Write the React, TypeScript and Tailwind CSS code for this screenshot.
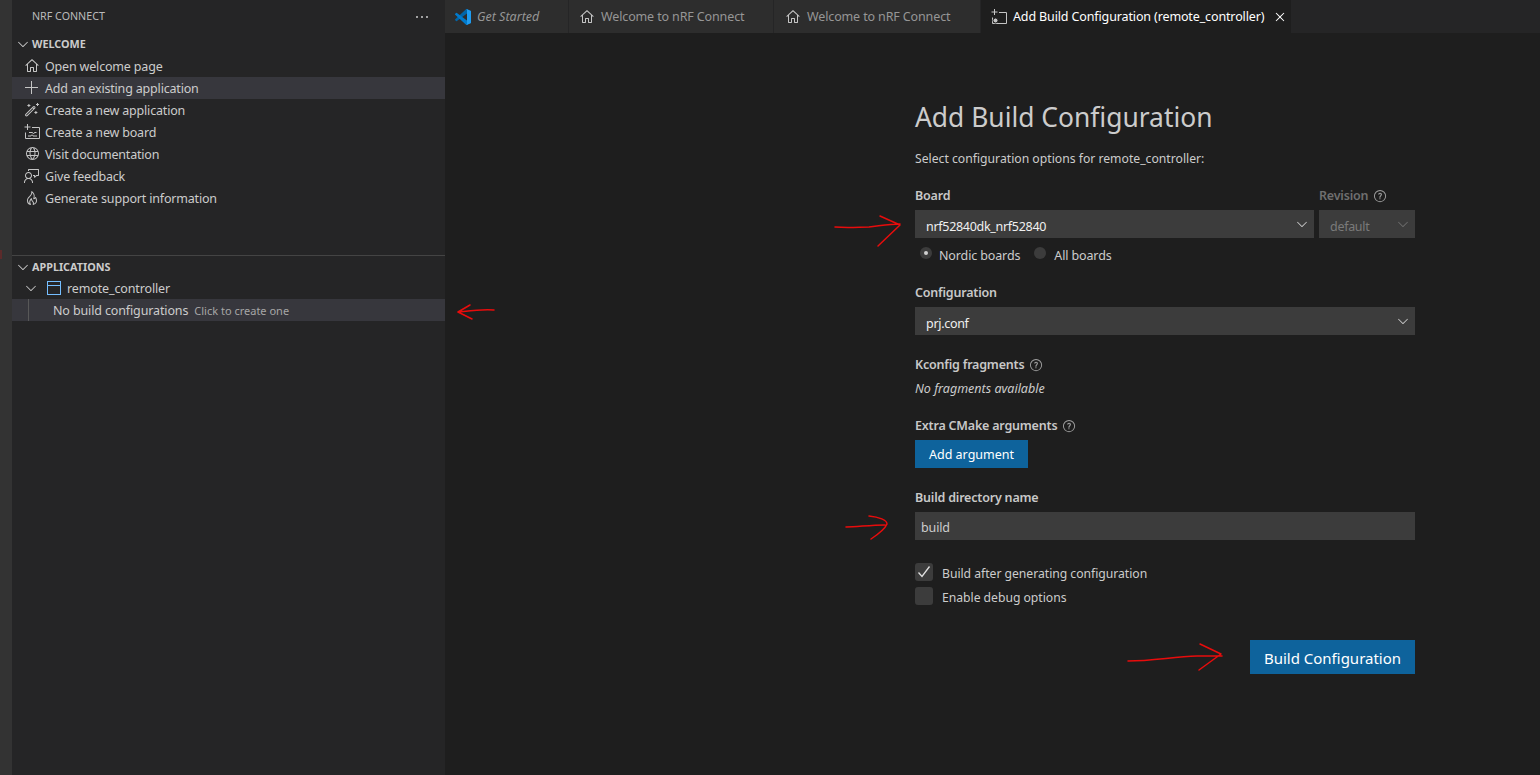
import React from "react";
import {
  VscAdd,
  VscChevronDown,
  VscClose,
  VscEllipsis,
  VscFeedback,
  VscFlame,
  VscGlobe,
  VscHome,
  VscQuestion,
  VscWand,
} from "react-icons/vsc";

const BoardIcon = ({ gear = false }: { gear?: boolean }) => (
  <svg width="16" height="16" viewBox="0 0 16 16" fill="none" stroke="currentColor" strokeWidth="1">
    <path d="M3.5 0v6M0.5 3h6" />
    <path d="M8 3.5h7.5v11h-14v-6" />
    {gear ? (
      <circle cx="4.5" cy="11.5" r="2.5" fill="currentColor" stroke="#1e1e1e" />
    ) : (
      <path d="M5 8.5h3.5a1 1 0 1 0 2 0h2M4 12h3a1 1 0 1 1 2 0h4" />
    )}
  </svg>
);

const VsLogo = () => (
  <svg width="16" height="16" viewBox="0 0 100 100" className="shrink-0">
    <path fill="#0065a9" d="M96.5 10.8 75.9.9a6.2 6.2 0 0 0-7.1 1.2L1.4 63.6a4.2 4.2 0 0 0 0 6.1l5.5 5a4.2 4.2 0 0 0 5.3.2L93.4 13.4c2.7-2.1 6.6-.1 6.6 3.3v-.2a6.2 6.2 0 0 0-3.5-5.7Z" />
    <path fill="#007acc" d="M96.5 89.2 75.9 99.1a6.2 6.2 0 0 1-7.1-1.2L1.4 36.4a4.2 4.2 0 0 1 0-6.1l5.5-5a4.2 4.2 0 0 1 5.3-.2l81.2 61.5c2.7 2.1 6.6.1 6.6-3.3v.2a6.2 6.2 0 0 1-3.5 5.7Z" />
    <path fill="#1f9cf0" d="M75.9 99.1a6.2 6.2 0 0 1-7.1-1.2c2.3 2.3 6.2.7 6.2-2.6V4.7c0-3.3-3.9-4.9-6.2-2.6A6.2 6.2 0 0 1 75.9.9l20.6 9.9a6.2 6.2 0 0 1 3.5 5.6v67.2a6.2 6.2 0 0 1-3.5 5.6L75.9 99.1Z" />
  </svg>
);

const RepoIcon = () => (
  <svg width="16" height="16" viewBox="0 0 16 16" fill="none" stroke="#75beff" strokeWidth="1">
    <rect x="1.5" y="1.5" width="13" height="13" />
    <path d="M1.5 5.5h13" />
  </svg>
);

const Arrow = ({ className, d, w, h }: { className: string; d: string; w: number; h: number }) => (
  <svg
    className={`absolute ${className}`}
    width={w}
    height={h}
    viewBox={`0 0 ${w} ${h}`}
    fill="none"
    stroke="#e80c0c"
    strokeWidth="1.5"
    strokeLinecap="round"
    strokeLinejoin="round"
  >
    <path d={d} />
  </svg>
);

const welcomeItems: { label: string; icon: React.ReactNode; active?: boolean }[] = [
  { label: "Open welcome page", icon: <VscHome size={16} /> },
  { label: "Add an existing application", icon: <VscAdd size={16} />, active: true },
  { label: "Create a new application", icon: <VscWand size={16} /> },
  { label: "Create a new board", icon: <BoardIcon /> },
  { label: "Visit documentation", icon: <VscGlobe size={16} /> },
  { label: "Give feedback", icon: <VscFeedback size={16} /> },
  { label: "Generate support information", icon: <VscFlame size={16} /> },
];

const Tab = ({ label, icon, italic, width, pad = "pl-[10px]" }: { label: string; icon: React.ReactNode; italic?: boolean; width: string; pad?: string }) => (
  <div className={`flex h-full shrink-0 items-center gap-[6px] bg-[#2d2d2d] text-[#969696] ${pad} ${width} ${italic ? "italic tracking-normal" : ""}`}>
    {icon}
    <span className="whitespace-nowrap pt-[2px]">{label}</span>
  </div>
);

const Select = ({ value, disabled, className }: { value: string; disabled?: boolean; className: string }) => (
  <div className={`flex h-[28px] items-center justify-between bg-[#3c3c3c] pl-[11px] pr-[4px] ${disabled ? "text-[#7a7a7a]" : "text-[#f0f0f0]"} ${className}`}>
    <span className="pt-[6px] tracking-[-0.3px]">{value}</span>
    <VscChevronDown size={16} className={disabled ? "text-[#6c6c6c]" : "text-[#c8c8c8]"} />
  </div>
);

const Help = () => <VscQuestion size={15} className="ml-[5px] text-[#a0a0a0]" />;

const Label = ({ children, className = "text-[#c8c8c8]" }: { children: React.ReactNode; className?: string }) => (
  <div className={`flex h-[18px] items-center font-semibold tracking-[-0.2px] ${className}`}>{children}</div>
);

export default function App() {
  return (
    <div
      className="relative flex h-[775px] w-[1540px] overflow-hidden bg-[#1e1e1e] text-[12.5px] tracking-[-0.13px] text-[#cccccc]"
      style={{ fontFamily: '"Noto Sans", sans-serif' }}
    >
      {/* activity bar strip */}
      <div className="w-[12px] shrink-0 bg-[#333333]" />

      {/* side bar */}
      <aside className="flex w-[433px] shrink-0 flex-col bg-[#252526]">
        <div className="flex h-[33px] shrink-0 items-center justify-between pl-[20px] pr-[15px] text-[10.7px] tracking-normal text-[#bbbbbb]">
          <span>NRF CONNECT</span>
          <VscEllipsis size={16} className="text-[#cccccc]" />
        </div>

        <div className="flex h-[22px] items-center gap-[1px] pl-[3px] text-[10.8px] font-bold tracking-normal text-[#cccccc]">
          <VscChevronDown size={16} />
          <span>WELCOME</span>
        </div>
        {welcomeItems.map((item) => (
          <div key={item.label} className={`flex h-[22px] items-center gap-[5px] pl-[12px] tracking-[-0.18px] ${item.active ? "bg-[#37373d]" : ""}`}>
            <span className="flex w-[16px] justify-center text-[#c5c5c5]">{item.icon}</span>
            <span className="pt-[2px]">{item.label}</span>
          </div>
        ))}

        <div className="mt-[46px] border-t border-[#444444]" />
        <div className="flex h-[21px] items-center gap-[1px] pl-[3px] text-[10.8px] font-bold tracking-normal text-[#cccccc]">
          <VscChevronDown size={16} />
          <span className="pt-[2px]">APPLICATIONS</span>
        </div>
        <div className="flex h-[22px] items-center gap-[5px] pl-[11px]">
          <VscChevronDown size={16} className="mr-[2px] text-[#c5c5c5]" />
          <RepoIcon />
          <span className="pt-[2px]">remote_controller</span>
        </div>
        <div className="flex h-[22px] items-center bg-[#37373d] pl-[16px]">
          <div className="mr-[24px] h-full w-px bg-[#585858]" />
          <span className="pt-[2px]">No build configurations</span>
          <span className="ml-[6px] pt-[2px] text-[11px] tracking-normal text-[#a6a6a6]">Click to create one</span>
        </div>
      </aside>

      {/* editor */}
      <main className="flex min-w-0 flex-1 flex-col">
        <div className="flex h-[33px] shrink-0 gap-px bg-[#252526]">
          <Tab label="Get Started" italic icon={<VsLogo />} width="w-[123px]" />
          <Tab label="Welcome to nRF Connect" icon={<VscHome size={16} className="text-[#c5c5c5]" />} width="w-[204px]" />
          <Tab label="Welcome to nRF Connect" icon={<VscHome size={16} className="text-[#c5c5c5]" />} width="w-[206px]" pad="pl-[11px]" />
          <div className="flex h-full w-[310px] items-center bg-[#1e1e1e] pl-[10px] text-white">
            <span className="text-[#c5c5c5]">
              <BoardIcon gear />
            </span>
            <span className="ml-[6px] whitespace-nowrap pt-[2px]">Add Build Configuration (remote_controller)</span>
            <VscClose size={16} className="ml-auto mr-[3px]" />
          </div>
        </div>

        <div className="ml-[470px] flex w-[500px] flex-col pt-[65px]">
          <h1 className="h-[38px] text-[26.4px] leading-[38px] font-normal tracking-normal text-[#cccccc]">Add Build Configuration</h1>
          <p className="mt-[14px] h-[18px] text-[12.2px] leading-[18px] tracking-normal">Select configuration options for remote_controller:</p>

          <div className="mt-[19px] flex gap-[5px]">
            <div className="flex-1">
              <Label>Board</Label>
              <Select value="nrf52840dk_nrf52840" className="mt-[5px]" />
            </div>
            <div className="w-[96px]">
              <Label className="text-[#6f6f6f]">
                Revision
                <Help />
              </Label>
              <Select value="default" disabled className="mt-[5px]" />
            </div>
          </div>

          <div className="mt-[8px] flex h-[18px] items-center pl-[5px]">
            <span className="-mt-[4px] flex h-[12px] w-[12px] items-center justify-center rounded-full bg-[#3c3c3c]">
              <span className="h-[4px] w-[4px] rounded-full bg-[#d0d0d0]" />
            </span>
            <span className="ml-[7px] pt-[3px]">Nordic boards</span>
            <span className="-mt-[4px] ml-[14px] h-[12px] w-[12px] rounded-full bg-[#3c3c3c]" />
            <span className="ml-[8px] pt-[3px]">All boards</span>
          </div>

          <Label className="mt-[20px] text-[#c8c8c8]">Configuration</Label>
          <Select value="prj.conf" className="mt-[5px]" />

          <Label className="mt-[21px] text-[#c8c8c8]">
            Kconfig fragments
            <Help />
          </Label>
          <p className="mt-[6px] h-[18px] leading-[18px] tracking-normal italic">No fragments available</p>

          <Label className="mt-[19px] text-[#c8c8c8]">
            Extra CMake arguments
            <Help />
          </Label>
          <button className="mt-[5px] h-[28px] w-[113px] bg-[#0e639c] pt-[3px] tracking-normal text-white">Add argument</button>

          <Label className="mt-[21px] text-[#c8c8c8]">Build directory name</Label>
          <div className="mt-[5px] flex h-[28px] items-center bg-[#3c3c3c] pl-[6px] pt-[4px]">build</div>

          <div className="mt-[23px] flex h-[18px] items-center text-[12.2px] tracking-[-0.03px]">
            <span className="flex h-[18px] w-[18px] items-center justify-center rounded-[3px] bg-[#3c3c3c]">
              <svg width="14" height="14" viewBox="0 0 14 14" fill="none" stroke="#e0e0e0" strokeWidth="1.3">
                <path d="M1.5 7.5 5 11.5 12.5 1.5" />
              </svg>
            </span>
            <span className="ml-[9px] pt-[4px]">Build after generating configuration</span>
          </div>
          <div className="mt-[6px] flex h-[18px] items-center text-[12.2px] tracking-[-0.03px]">
            <span className="h-[18px] w-[18px] rounded-[3px] bg-[#3c3c3c]" />
            <span className="ml-[9px] pt-[4px]">Enable debug options</span>
          </div>

          <button className="mt-[35px] h-[34px] w-[165px] self-end bg-[#0e639c] pt-[3px] text-[15px] tracking-normal text-white">Build Configuration</button>
        </div>
      </main>

      {/* stray red mark at the screen edge */}
      <div className="absolute left-0 top-[250px] h-[9px] w-[2px] bg-[#5c2b2b]" />

      {/* hand drawn annotations */}
      <Arrow className="left-[834px] top-[214px]" w={70} h={34} d="M1 13C15 14 25 13 35 13C45 12 55 10 66 10M46 2 66 11 44 32" />
      <Arrow className="left-[456px] top-[304px]" w={40} h={16} d="M38 6C25 5 12 7 2 8M14 1 2 8 16 15" />
      <Arrow className="left-[845px] top-[514px]" w={46} h={26} d="M1 13C12 13 25 11 40 11M24 2C34 3 42 6 42 10C40 15 32 21 26 25" />
      <Arrow className="left-[1127px] top-[642px]" w={98} h={30} d="M1 19C25 19 45 15 70 14C80 14 88 14 95 14M73 2 94 12 72 28" />
    </div>
  );
}
